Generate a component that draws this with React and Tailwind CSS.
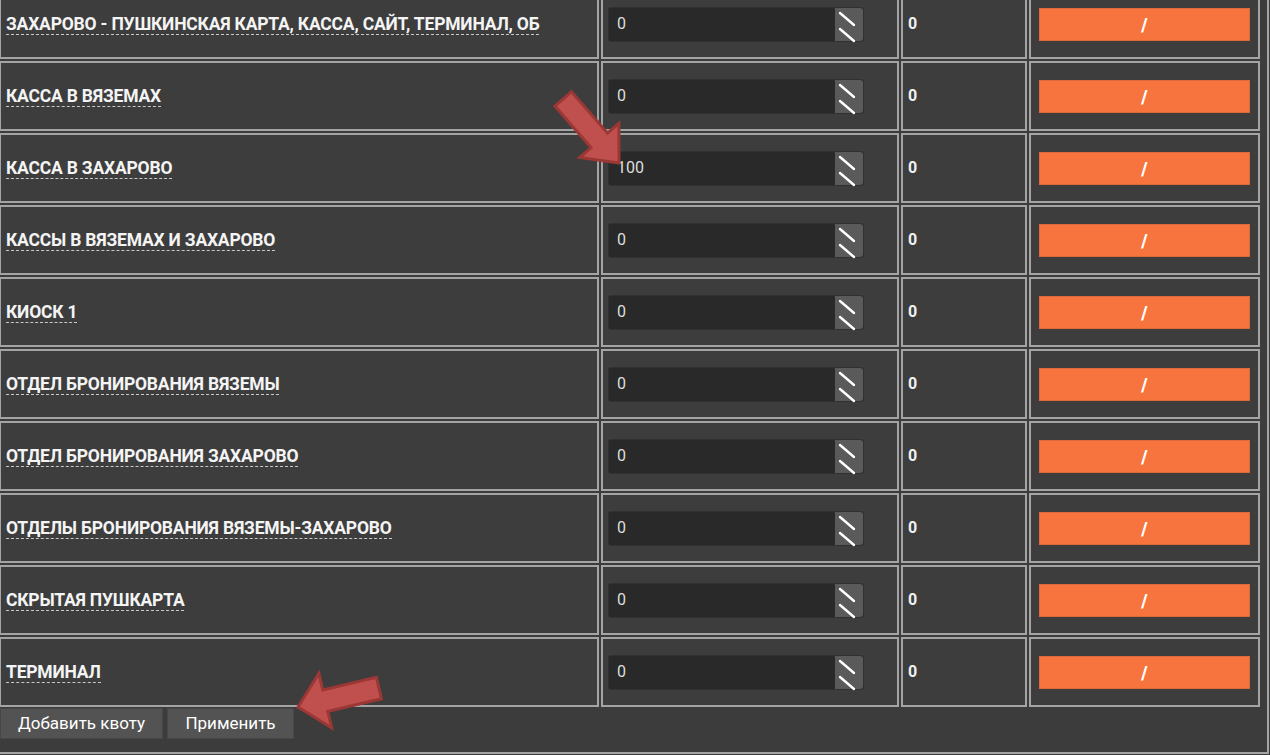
import React from "react"

const rows = [
  { name: "ЗАХАРОВО - ПУШКИНСКАЯ КАРТА, КАССА, САЙТ, ТЕРМИНАЛ, ОБ", value: "0" },
  { name: "КАССА В ВЯЗЕМАХ", value: "0" },
  { name: "КАССА В ЗАХАРОВО", value: "100" },
  { name: "КАССЫ В ВЯЗЕМАХ И ЗАХАРОВО", value: "0" },
  { name: "КИОСК 1", value: "0" },
  { name: "ОТДЕЛ БРОНИРОВАНИЯ ВЯЗЕМЫ", value: "0" },
  { name: "ОТДЕЛ БРОНИРОВАНИЯ ЗАХАРОВО", value: "0" },
  { name: "ОТДЕЛЫ БРОНИРОВАНИЯ ВЯЗЕМЫ-ЗАХАРОВО", value: "0" },
  { name: "СКРЫТАЯ ПУШКАРТА", value: "0" },
  { name: "ТЕРМИНАЛ", value: "0" },
]

function Spinner() {
  return (
    <div className="w-[28px] h-full bg-[#5a5a5a] rounded-r-[3px] flex-none">
      <svg width="28" height="35" viewBox="0 0 28 35">
        <path d="M5 5 L19 17" stroke="#ffffff" strokeWidth="2.4" strokeLinecap="round" />
        <path d="M5 21 L19 33" stroke="#ffffff" strokeWidth="2.4" strokeLinecap="round" />
      </svg>
    </div>
  )
}

function QuotaRow({ row }) {
  const cell = "h-[70px] border-2 border-[#a4a4a4] bg-[#3d3d3d] flex items-center"
  return (
    <>
      <div className={cell + " pl-[5px] overflow-hidden"}>
        <span className="whitespace-nowrap text-[17.5px] font-bold text-[#f4f4f4] leading-[20px] border-b border-dashed border-[#c8c8c8] tracking-[-0.2px]">
          {row.name}
        </span>
      </div>
      <div className={cell + " pl-[5px]"}>
        <div className="w-[256px] h-[35px] flex bg-[#292929] border border-[#313131] rounded-[3px]">
          <div className="flex-1 flex items-center pl-[8px] text-[16px] text-[#dedede]">{row.value}</div>
          <Spinner />
        </div>
      </div>
      <div className={cell + " pl-[5px] text-[16px] font-bold text-[#f0f0f0]"}>0</div>
      <div className={cell + " px-[8px]"}>
        <div className="w-full h-[33px] bg-[#f7743e] border border-[#e0693a] flex items-center justify-center text-[18px] font-black text-white">
          /
        </div>
      </div>
    </>
  )
}

export default function App() {
  return (
    <div className="relative w-[1270px] h-[755px] overflow-hidden bg-[#3c3c3c]" style={{ fontFamily: "Roboto, 'Noto Sans', sans-serif" }}>
      <div className="w-[1269px] h-[754px] border-r-2 border-b-2 border-[#a4a4a4] overflow-hidden">
        <div className="mt-[-11px] ml-[-1px] grid grid-cols-[600px_298px_126px_231px] gap-[2px]">
          {rows.map((r) => (
            <QuotaRow key={r.name} row={r} />
          ))}
        </div>
        <div className="flex gap-[4px] mt-[1px]">
          <button className="h-[31px] w-[163px] bg-[#535353] border border-[#474747] text-[17px] text-white">
            Добавить квоту
          </button>
          <button className="h-[31px] w-[127px] bg-[#535353] border border-[#474747] text-[17px] text-white">
            Применить
          </button>
        </div>
      </div>

      <svg className="absolute top-0 left-0 pointer-events-none" width="1270" height="755" viewBox="0 0 1270 755">
        <polygon
          points="571.5,91.7 607.6,133.2 618.9,123.3 619,163 579.7,157.5 591,147.6 554.9,106.1"
          fill="#c0504d"
          stroke="#9b3735"
          strokeWidth="3"
          strokeLinejoin="miter"
        />
        <polygon
          points="298,707 318.9,673.3 322.8,689.9 376.4,677.4 381.4,698.8 327.8,711.3 331.7,727.9"
          fill="#c0504d"
          stroke="#9b3735"
          strokeWidth="3"
          strokeLinejoin="miter"
        />
      </svg>
    </div>
  )
}
